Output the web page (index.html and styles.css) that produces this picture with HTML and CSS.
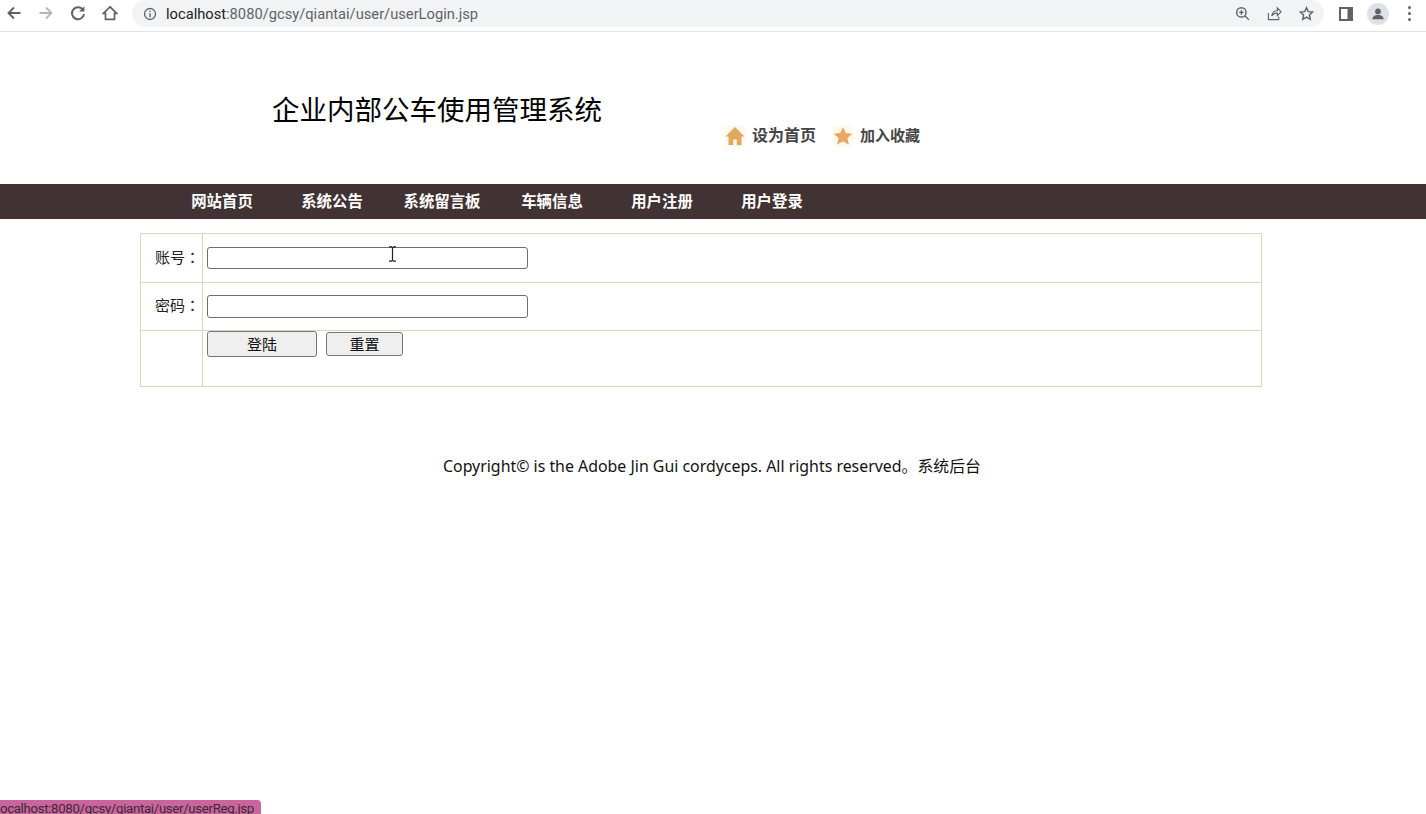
FILE: index.html
```html
<!DOCTYPE html>
<html lang="zh">
<head>
    <meta charset="UTF-8">
    <title>企业内部公车使用管理系统</title>
    <link rel="stylesheet" href="styles.css">
</head>
<body>
    <div class="browser-bar">
        <div class="bar-nav">
            <svg class="bar-icon" viewBox="0 0 16 16"><path d="M14.5 8H2.500M8 2.500 2.500 8 8 13.500" fill="none" stroke="#5f6368" stroke-width="1.900"/></svg>
            <svg class="bar-icon" viewBox="0 0 16 16"><path d="M1.500 8h12M8 2.500 13.500 8 8 13.500" fill="none" stroke="#b4b7bb" stroke-width="1.900"/></svg>
            <svg class="bar-icon" viewBox="0 0 16 16"><path d="M13.200 5.200A6 6 0 1 0 14 9" fill="none" stroke="#5f6368" stroke-width="2"/><path d="M14.400 1.200v5.400H9z" fill="#5f6368"/></svg>
            <svg class="bar-icon" viewBox="0 0 16 16"><path d="M8 1.800 1.300 8.300h2.200v6h9v-6h2.200z" fill="none" stroke="#5f6368" stroke-width="1.700"/></svg>
        </div>
        <div class="address">
            <svg class="info-icon" viewBox="0 0 16 16"><circle cx="8" cy="8" r="6.300" fill="none" stroke="#5f6368" stroke-width="1.500"/><path d="M7.200 7h1.600v4.600H7.200zM7.200 4.200h1.600v1.600H7.200z" fill="#5f6368"/></svg>
            <span class="url"><b>localhost</b>:8080/gcsy/qiantai/user/userLogin.jsp</span>
            <div class="address-tools">
                <svg class="tool-icon" viewBox="0 0 16 16"><circle cx="6.800" cy="6.800" r="5" fill="none" stroke="#5f6368" stroke-width="1.500"/><path d="m10.500 10.500 4.300 4.300M4.400 6.800h4.800M6.800 4.400v4.800" fill="none" stroke="#5f6368" stroke-width="1.500"/></svg>
                <svg class="tool-icon" viewBox="0 0 16 16"><path d="M1.500 7.500v7h11v-3M5 10.500C5.500 7 8 5 11 5V2l4 4.200-4 4V7.500C8.500 7.500 6.500 8.500 5 10.500z" fill="none" stroke="#5f6368" stroke-width="1.200"/></svg>
                <svg class="tool-icon" viewBox="0 0 16 16"><path d="m8 1.800 1.900 4.200 4.600.5-3.400 3.100.9 4.600L8 11.900l-4 2.300.9-4.600L1.500 6.500l4.600-.5z" fill="none" stroke="#5f6368" stroke-width="1.500"/></svg>
            </div>
        </div>
        <div class="bar-right">
            <svg class="panel-icon" viewBox="0 0 14 14"><path d="M0 0h14v14H0zM2 2v10h6.500V2z" fill="#5f6368" fill-rule="evenodd"/></svg>
            <div class="avatar"><svg viewBox="0 0 16 16"><circle cx="8" cy="5" r="3.300" fill="#5f6368"/><path d="M1.500 14c0-3.500 3-5 6.500-5s6.500 1.500 6.500 5z" fill="#5f6368"/></svg></div>
            <div class="menu-dots"><i></i><i></i><i></i></div>
        </div>
    </div>

    <div class="top">
        <h1 class="site-title">企业内部公车使用管理系统</h1>
        <div class="top-links">
            <a class="top-link home-link">
                <svg class="glow-icon" viewBox="0 0 22 22"><path d="M11 2 1.500 11.500h3V20h4.700v-5.500h3.600V20h4.700v-8.500h3z" fill="#e0a75e"/></svg>
                设为首页
            </a>
            <a class="top-link fav-link">
                <svg class="glow-icon" viewBox="0 0 22 22"><path d="m11 2 2.800 6 6.400.7-4.800 4.400 1.400 6.400L11 16.200 5.200 19.500l1.400-6.400-4.800-4.400L8.200 8z" fill="#e5a866"/></svg>
                加入收藏
            </a>
        </div>
    </div>

    <div class="main-nav">
        <a>网站首页</a>
        <a>系统公告</a>
        <a>系统留言板</a>
        <a>车辆信息</a>
        <a>用户注册</a>
        <a>用户登录</a>
    </div>

    <table class="login-table">
        <tr class="row-user">
            <td class="label" lang="zh-Hant">账号：</td>
            <td><input class="text-input" type="text"></td>
        </tr>
        <tr class="row-pass">
            <td class="label" lang="zh-Hant">密码：</td>
            <td><input class="text-input" type="password"></td>
        </tr>
        <tr class="row-btn">
            <td></td>
            <td class="btn-cell">
                <button class="btn btn-login">登陆</button>
                <button class="btn btn-reset">重置</button>
            </td>
        </tr>
    </table>

    <p class="copyright">Copyright© is the Adobe Jin Gui cordyceps. All rights reserved。系统后台</p>

    <svg class="text-cursor" viewBox="0 0 9 16"><path d="M1 .8h2.500l1 1 1-1H8M4.500 1.800v12.400M1 15.200h2.500l1-1 1 1H8" fill="none" stroke="#222" stroke-width="1.200"/></svg>
    <div class="status-bubble"><span class="status-text">localhost:8080/gcsy/qiantai/user/userReg.jsp</span></div>
</body>
</html>
```

FILE: styles.css
```css
html, body {
    margin: 0;
    padding: 0;
    height: 814px;
    overflow: hidden;
}
body {
    background: #fff;
    color: #000;
    font-family: "Liberation Sans", "Noto Sans CJK SC", sans-serif;
    position: relative;
}

/* browser toolbar */
.browser-bar {
    height: 31px;
    border-bottom: 1px solid #dfe1e4;
    display: flex;
    align-items: flex-start;
    background: #fff;
}
.bar-nav {
    width: 132px;
    display: flex;
    gap: 16px;
    padding: 5px 0 0 6px;
    box-sizing: border-box;
    flex: none;
}
.bar-icon {
    width: 16px;
    height: 16px;
}
.address {
    width: 1192px;
    height: 27px;
    flex: none;
    background: #f1f3f4;
    border-radius: 14px;
    display: flex;
    align-items: center;
    box-sizing: border-box;
    padding-left: 11px;
}
.info-icon {
    width: 14px;
    height: 14px;
    margin-right: 9px;
}
.url {
    font-family: "Roboto", "Noto Sans", sans-serif;
    font-size: 14.7px;
    color: #5f6368;
    white-space: nowrap;
}
.url b {
    font-weight: 400;
    color: #202124;
}
.address-tools {
    margin-left: auto;
    display: flex;
    gap: 17px;
    padding-right: 10px;
}
.tool-icon {
    width: 15px;
    height: 15px;
}
.bar-right {
    display: flex;
    align-items: center;
    height: 27px;
    padding-left: 15px;
}
.panel-icon {
    width: 14px;
    height: 14px;
    margin-right: 14px;
}
.avatar {
    width: 22px;
    height: 22px;
    border-radius: 50%;
    background: #dee1e6;
    display: flex;
    align-items: center;
    justify-content: center;
    margin-right: 19px;
}
.avatar svg {
    width: 14px;
    height: 14px;
}
.menu-dots {
    display: flex;
    flex-direction: column;
    gap: 3px;
}
.menu-dots i {
    display: block;
    width: 3px;
    height: 3px;
    border-radius: 50%;
    background: #5f6368;
}

/* header */
.top {
    height: 152px;
    display: flex;
    box-sizing: border-box;
    padding-left: 272px;
}
.site-title {
    margin: 61px 0 0;
    font-size: 27.5px;
    font-weight: 400;
    line-height: 36px;
    width: 452px;
    white-space: nowrap;
}
.top-links {
    display: flex;
    gap: 16px;
    padding-top: 91px;
    height: 26px;
}
.top-link {
    display: flex;
    align-items: center;
    font-weight: 700;
    color: #454545;
    line-height: 26px;
    white-space: nowrap;
}
.home-link {
    font-size: 16px;
}
.fav-link {
    font-size: 15px;
}
.glow-icon {
    width: 22px;
    height: 22px;
    margin-right: 6px;
    background: radial-gradient(circle, #fff3d6 0%, #fffaf0 70%, #fff 100%);
}

/* nav */
.main-nav {
    height: 35px;
    background: #413234;
    display: flex;
    padding-left: 167px;
}
.main-nav a {
    width: 110px;
    text-align: center;
    color: #fff;
    font-size: 15.4px;
    font-weight: 700;
    line-height: 35px;
    white-space: nowrap;
}

/* login form */
.login-table {
    margin: 14px 0 0 140px;
    width: 1122px;
    border-collapse: collapse;
    table-layout: fixed;
    font-size: 14.5px;
    color: #222;
}
.login-table td {
    border: 1px solid #d8d8bc;
    padding: 0 0 0 4px;
    vertical-align: middle;
}
.login-table td.label {
    width: 62px;
    box-sizing: border-box;
    padding: 0 2px 4px 0;
    text-align: right;
    font-family: "Noto Sans CJK TC", sans-serif;
    font-size: 15px;
}
.row-user td {
    height: 48px;
}
.row-pass td {
    height: 47px;
}
.row-btn td {
    height: 55px;
    vertical-align: top;
}
.text-input {
    display: block;
    width: 321px;
    height: 23px;
    box-sizing: border-box;
    border: 1px solid #6e6e6e;
    border-radius: 3px;
    background: #fff;
    padding: 1px 2px;
    margin: 0;
}
.row-user .text-input {
    height: 22px;
    margin-bottom: 1px;
}
.btn-cell {
    font-size: 0;
}
.btn {
    box-sizing: border-box;
    background: #efefef;
    border: 1px solid #767676;
    border-radius: 3px;
    font-family: "Liberation Sans", "Noto Sans CJK SC", sans-serif;
    font-size: 15px;
    color: #111;
    padding: 0 0 2px;
    vertical-align: top;
}
.btn-login {
    width: 110px;
    height: 26px;
}
.btn-reset {
    width: 77px;
    height: 24px;
    margin: 1px 0 0 9px;
}

.copyright {
    margin: 69px 0 0;
    padding-right: 2px;
    text-align: center;
    font-family: "Noto Sans", "Noto Sans CJK SC", sans-serif;
    font-size: 15.9px;
    line-height: 20px;
    color: #111;
}

/* things on top of the page */
.text-cursor {
    position: absolute;
    left: 388px;
    top: 246px;
    width: 9px;
    height: 16px;
}
.status-bubble {
    position: absolute;
    left: 0;
    bottom: 0;
    width: 261px;
    height: 14px;
    overflow: hidden;
    background: #c9659c;
    border-top-right-radius: 4px;
}
.status-text {
    display: block;
    margin-left: -3px;
    font-family: "Roboto", "Noto Sans", sans-serif;
    font-size: 13.2px;
    letter-spacing: -0.3px;
    line-height: 18px;
    color: #3a2a34;
    white-space: nowrap;
}
```
